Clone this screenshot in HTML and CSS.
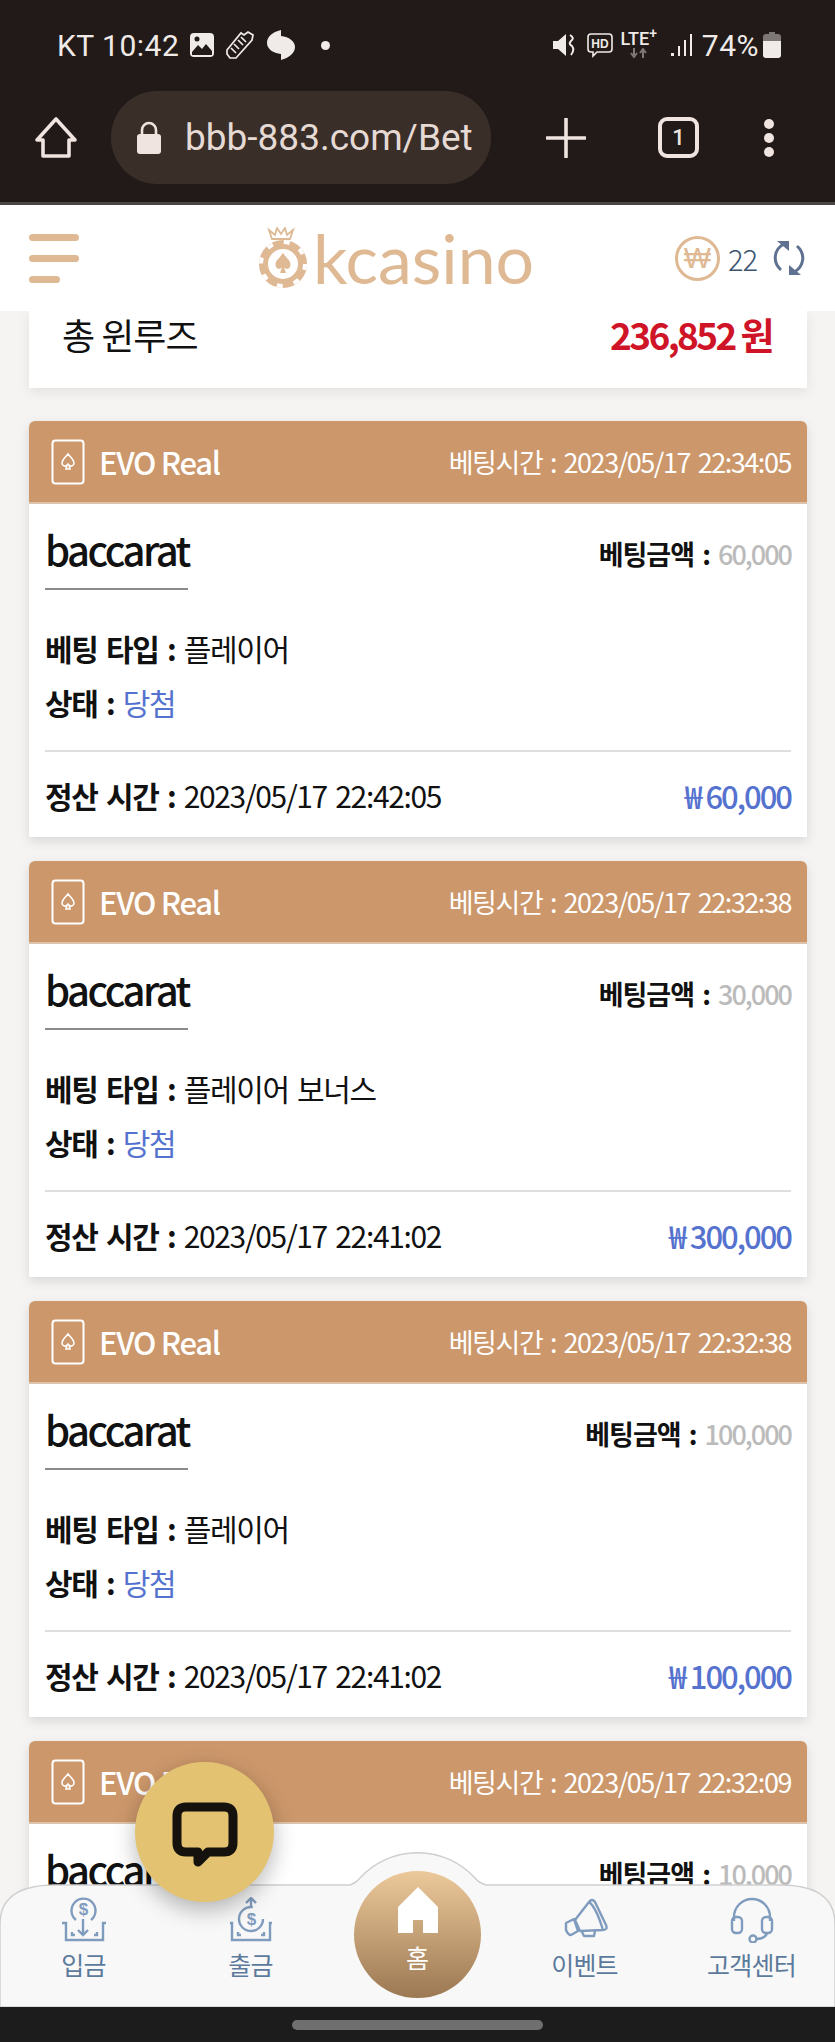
FILE: index.html
```html
<!DOCTYPE html>
<html>
<head>
  <title>kcasino</title>
  <link rel="stylesheet" href="styles.css">
</head>
<body>
  <div class="phoneTop">
    <div class="statusBar">
      <span class="statusText">KT 10:42</span>
      <svg class="statusIcon" width="26" height="26" viewBox="0 0 26 26">
        <rect x="1" y="1" width="24" height="24" rx="4" fill="#f0ebe8"/>
        <path d="M3 20 L9 13 L13 17 L17 12 L23 19 V23 H3 Z" fill="#211a18"/>
        <circle cx="8" cy="7" r="2.5" fill="#211a18"/>
      </svg>
      <svg class="statusIcon" width="30" height="30" viewBox="0 0 30 30">
        <path d="M2 20 L16 3 L19 5 L23 2 L28 5 L27 10 L11 28 L5 28 L2 24 Z M6 18 L11 23 M9 14 L14 19 M13 10 L18 15 M16 7 L21 12" fill="none" stroke="#f0ebe8" stroke-width="1.7"/>
      </svg>
      <svg class="statusIcon" width="32" height="30" viewBox="0 0 32 30">
        <path d="M16 0 C7 2 2 7 2 13 C2 19 8 23 16 24 Z M16 6 C24 7 30 11 30 17 C30 23 24 28 16 30 Z" fill="#f0ebe8"/>
      </svg>
      <span class="statusDot"></span>
      <span class="statusGap"></span>
      <svg class="statusIcon" width="24" height="26" viewBox="0 0 24 26">
        <path d="M1 9 H6 L14 2 V24 L6 17 H1 Z" fill="#f0ebe8"/>
        <path d="M18 3 Q23 6 19 9 Q16 12 20 14 Q23 18 19 23" fill="none" stroke="#f0ebe8" stroke-width="2"/>
      </svg>
      <svg class="statusIcon" width="28" height="26" viewBox="0 0 28 26">
        <path d="M5 2 H23 Q26 2 26 5 V17 Q26 20 23 20 H11 L7 24 V20 H5 Q2 20 2 17 V5 Q2 2 5 2 Z" fill="none" stroke="#f0ebe8" stroke-width="1.6"/>
        <text x="14" y="16" class="hdText">HD</text>
      </svg>
      <span class="lteBox">LTE<sup>+</sup><svg width="20" height="10" viewBox="0 0 20 10"><path d="M5 0 V8 M2 5 L5 9 L8 5 M14 10 V2 M11 5 L14 1 L17 5" fill="none" stroke="#7d7876" stroke-width="2"/></svg></span>
      <svg class="statusIcon" width="22" height="24" viewBox="0 0 22 24">
        <path d="M1 20 H4 V23 H1 Z M8 13 H10 V23 H8 Z M14 7 H16 V23 H14 Z M20 1 H22 V23 H20 Z" fill="#f0ebe8"/>
      </svg>
      <span class="statusText">74%</span>
      <svg class="statusIcon battery" width="18" height="26" viewBox="0 0 18 26">
        <path d="M6 0 H12 V2 H15 Q18 2 18 5 V9 H0 V5 Q0 2 3 2 H6 Z" fill="#7d7876"/>
        <path d="M0 9 H18 V23 Q18 26 15 26 H3 Q0 26 0 23 Z" fill="#f0ebe8"/>
      </svg>
    </div>
    <div class="urlBar">
      <svg width="44" height="44" viewBox="0 0 44 44">
        <path d="M22 3 L3 24 H9 V40 H35 V24 H41 Z" fill="none" stroke="#efe4df" stroke-width="3.6" stroke-linejoin="round"/>
      </svg>
      <div class="urlPill">
        <svg width="26" height="34" viewBox="0 0 26 34">
          <path d="M6 14 V9 A7 7 0 0 1 20 9 V14" fill="none" stroke="#efe4df" stroke-width="2.6"/>
          <rect x="1" y="13" width="24" height="20" rx="3" fill="#efe4df"/>
        </svg>
        <span class="urlText">bbb-883.com/Bet</span>
      </div>
      <svg class="plusIcon" width="40" height="40" viewBox="0 0 40 40">
        <path d="M20 1 V39 M1 20 H39" stroke="#efe4df" stroke-width="3.6" stroke-linecap="round"/>
      </svg>
      <span class="tabCount">1</span>
      <span class="moreDots"><i></i><i></i><i></i></span>
    </div>
  </div>

  <header class="siteHeader">
    <div class="menuBars"><i></i><i></i><i></i></div>
    <div class="logo">
      <svg width="52" height="62" viewBox="0 0 52 62">
        <path d="M15 12 L12 3 L18 8 L20 1 L24 7 L28 1 L30 8 L36 3 L33 12 Z" fill="none" stroke="#deb993" stroke-width="1.8"/>
        <circle cx="26" cy="37" r="19.5" fill="none" stroke="#deb993" stroke-width="9"/>
        <circle cx="26" cy="37" r="22" fill="none" stroke="#fff" stroke-width="4" stroke-dasharray="6 11.3"/>
        <path d="M26 26 C30 32 35 34 33 40 C31 43 28 42 27 40 L29 46 H23 L25 40 C24 42 21 43 19 40 C17 34 22 32 26 26 Z" fill="#deb993"/>
      </svg>
      <span class="logoText">kcasino</span>
    </div>
    <div class="balance">
      <span class="wonMark">₩</span>
      <span class="balanceNum">22</span>
      <svg width="36" height="36" viewBox="0 0 36 36">
        <path d="M13 4 C3 9 1 22 10 30" fill="none" stroke="#5f7190" stroke-width="3"/>
        <path d="M23 32 C33 27 35 14 26 6" fill="none" stroke="#5f7190" stroke-width="3"/>
        <path d="M6 1 H18 V11 Z M30 35 H18 V25 Z" fill="#5f7190"/>
      </svg>
    </div>
  </header>

  <main class="content">
    <section class="summary">
      <span class="summaryLabel">총 윈루즈</span>
      <span class="summaryValue">236,852 원</span>
    </section>

    <article class="betCard">
      <div class="cardHead">
        <svg class="cardIcon" width="34" height="46" viewBox="0 0 34 46">
          <rect x="1.5" y="1.5" width="31" height="43" rx="3" fill="none" stroke="#fff" stroke-width="2"/>
          <path d="M17 15 C20 19 23 20 23 24 C23 27 20 28 18 26 L19 30 H15 L16 26 C14 28 11 27 11 24 C11 20 14 19 17 15 Z" fill="none" stroke="#fff" stroke-width="1.6"/>
        </svg>
        <span class="gameName">EVO Real</span>
        <span class="betTime">베팅시간 : 2023/05/17 22:34:05</span>
      </div>
      <div class="cardBody">
        <div class="titleRow">
          <h2>baccarat</h2>
          <span class="betAmount"><b>베팅금액 :</b> <em>60,000</em></span>
        </div>
        <p class="infoRow"><b>베팅 타입 :</b> 플레이어</p>
        <p class="infoRow"><b>상태 :</b> <span class="win">당첨</span></p>
        <div class="cardFoot">
          <span><b>정산 시간 :</b> 2023/05/17 22:42:05</span>
          <span class="payout">₩ 60,000</span>
        </div>
      </div>
    </article>

    <article class="betCard">
      <div class="cardHead">
        <svg class="cardIcon" width="34" height="46" viewBox="0 0 34 46">
          <rect x="1.5" y="1.5" width="31" height="43" rx="3" fill="none" stroke="#fff" stroke-width="2"/>
          <path d="M17 15 C20 19 23 20 23 24 C23 27 20 28 18 26 L19 30 H15 L16 26 C14 28 11 27 11 24 C11 20 14 19 17 15 Z" fill="none" stroke="#fff" stroke-width="1.6"/>
        </svg>
        <span class="gameName">EVO Real</span>
        <span class="betTime">베팅시간 : 2023/05/17 22:32:38</span>
      </div>
      <div class="cardBody">
        <div class="titleRow">
          <h2>baccarat</h2>
          <span class="betAmount"><b>베팅금액 :</b> <em>30,000</em></span>
        </div>
        <p class="infoRow"><b>베팅 타입 :</b> 플레이어 보너스</p>
        <p class="infoRow"><b>상태 :</b> <span class="win">당첨</span></p>
        <div class="cardFoot">
          <span><b>정산 시간 :</b> 2023/05/17 22:41:02</span>
          <span class="payout">₩ 300,000</span>
        </div>
      </div>
    </article>

    <article class="betCard">
      <div class="cardHead">
        <svg class="cardIcon" width="34" height="46" viewBox="0 0 34 46">
          <rect x="1.5" y="1.5" width="31" height="43" rx="3" fill="none" stroke="#fff" stroke-width="2"/>
          <path d="M17 15 C20 19 23 20 23 24 C23 27 20 28 18 26 L19 30 H15 L16 26 C14 28 11 27 11 24 C11 20 14 19 17 15 Z" fill="none" stroke="#fff" stroke-width="1.6"/>
        </svg>
        <span class="gameName">EVO Real</span>
        <span class="betTime">베팅시간 : 2023/05/17 22:32:38</span>
      </div>
      <div class="cardBody">
        <div class="titleRow">
          <h2>baccarat</h2>
          <span class="betAmount"><b>베팅금액 :</b> <em>100,000</em></span>
        </div>
        <p class="infoRow"><b>베팅 타입 :</b> 플레이어</p>
        <p class="infoRow"><b>상태 :</b> <span class="win">당첨</span></p>
        <div class="cardFoot">
          <span><b>정산 시간 :</b> 2023/05/17 22:41:02</span>
          <span class="payout">₩ 100,000</span>
        </div>
      </div>
    </article>

    <article class="betCard">
      <div class="cardHead">
        <svg class="cardIcon" width="34" height="46" viewBox="0 0 34 46">
          <rect x="1.5" y="1.5" width="31" height="43" rx="3" fill="none" stroke="#fff" stroke-width="2"/>
          <path d="M17 15 C20 19 23 20 23 24 C23 27 20 28 18 26 L19 30 H15 L16 26 C14 28 11 27 11 24 C11 20 14 19 17 15 Z" fill="none" stroke="#fff" stroke-width="1.6"/>
        </svg>
        <span class="gameName">EVO Real</span>
        <span class="betTime">베팅시간 : 2023/05/17 22:32:09</span>
      </div>
      <div class="cardBody">
        <div class="titleRow">
          <h2>baccarat</h2>
          <span class="betAmount"><b>베팅금액 :</b> <em>10,000</em></span>
        </div>
      </div>
    </article>
  </main>

  <button class="chatButton">
    <svg width="66" height="68" viewBox="0 0 66 68">
      <path d="M14 5 H52 Q61 5 61 14 V41 Q61 50 52 50 H36 L26 60 V50 H14 Q5 50 5 41 V14 Q5 5 14 5 Z" fill="none" stroke="#15120e" stroke-width="9" stroke-linejoin="round"/>
    </svg>
  </button>

  <nav class="bottomNav">
    <svg class="navShape" width="835" height="155" viewBox="0 0 835 155">
      <path d="M0 72 Q0 33 55 33 H350 Q356 31 360 26 A78 78 0 0 1 475 26 Q479 31 486 33 H780 Q835 33 835 72 V155 H0 Z" fill="#f8f8f8" stroke="#cfcfcf" stroke-width="1.5"/>
    </svg>
    <a class="navItem">
      <svg width="48" height="46" viewBox="0 0 48 46">
        <path d="M16 23 A12 12 0 1 1 31 23" fill="none" stroke="#7f9bbd" stroke-width="2.4"/>
        <text x="23" y="18" class="navDollar">$</text>
        <path d="M23 22 V38 M18 33 L23 38 L28 33" fill="none" stroke="#7f9bbd" stroke-width="2.4"/>
        <path d="M2 26 H6 V43 H43 V26 H46 M12 35 V38 H15 M37 35 V38 H34" fill="none" stroke="#7f9bbd" stroke-width="2.4"/>
      </svg>
      <span>입금</span>
    </a>
    <a class="navItem">
      <svg width="44" height="46" viewBox="0 0 44 46">
        <path d="M22 1 V10 M17 6 L22 1 L27 6" fill="none" stroke="#7f9bbd" stroke-width="2.4"/>
        <circle cx="22" cy="22" r="12" fill="none" stroke="#7f9bbd" stroke-width="2.4" stroke-dasharray="58 18"/>
        <text x="22" y="28" class="navDollar">$</text>
        <path d="M1 26 H3 V43 H41 V26 H43 M9 35 V38 H12 M35 35 V38 H32" fill="none" stroke="#7f9bbd" stroke-width="2.4"/>
      </svg>
      <span>출금</span>
    </a>
    <a class="navHome">
      <svg width="42" height="46" viewBox="0 0 42 46">
        <path d="M21 0 L41 20 V46 H26 V33 H16 V46 H1 V20 Z" fill="#fff"/>
      </svg>
      <span>홈</span>
    </a>
    <a class="navItem">
      <svg width="46" height="46" viewBox="0 0 46 46">
        <path d="M13 23 L27 5 Q30 1 33 5 L44 28 Q46 33 41 33 L18 34 Z M27 5 Q34 10 41 33" fill="none" stroke="#7f9bbd" stroke-width="2.4" stroke-linejoin="round"/>
        <path d="M4 26 L12 22 L16 34 L9 38 Q6 38 4 33 Z M20 35 L22 39 H32 L33 34" fill="none" stroke="#7f9bbd" stroke-width="2.4" stroke-linejoin="round"/>
      </svg>
      <span>이벤트</span>
    </a>
    <a class="navItem">
      <svg width="44" height="46" viewBox="0 0 44 46">
        <path d="M4 24 V20 A18 18 0 0 1 40 20 V24" fill="none" stroke="#7f9bbd" stroke-width="2.4"/>
        <rect x="2" y="20" width="10" height="16" rx="4" fill="none" stroke="#7f9bbd" stroke-width="2.4"/>
        <rect x="32" y="20" width="10" height="16" rx="4" fill="none" stroke="#7f9bbd" stroke-width="2.4"/>
        <path d="M37 36 Q36 41 27 42" fill="none" stroke="#7f9bbd" stroke-width="2.4"/>
        <circle cx="23" cy="42" r="3.5" fill="none" stroke="#7f9bbd" stroke-width="2.4"/>
      </svg>
      <span>고객센터</span>
    </a>
  </nav>

  <div class="gestureBar"><i></i></div>
</body>
</html>
```

FILE: styles.css
```css
* {
  box-sizing: border-box;
}
body {
  position: relative;
  display: flex;
  flex-direction: column;
  width: 835px;
  height: 2042px;
  margin: 0;
  overflow: hidden;
  font-family: "Noto Sans CJK KR", "Noto Sans", sans-serif;
  background-color: #f5f4f3;
  color: #111;
}

/* phone status bar and browser bar */
.phoneTop {
  flex: none;
  height: 205px;
  background-color: #211a18;
  border-bottom: 3px solid #4a4542;
}
.statusBar {
  display: flex;
  align-items: center;
  gap: 10px;
  height: 30px;
  margin-top: 30px;
  padding: 0 54px 0 57px;
  color: #f0ebe8;
}
.statusText {
  font-family: Roboto, sans-serif;
  font-size: 30px;
  letter-spacing: 0.5px;
}
.statusDot {
  width: 9px;
  height: 9px;
  margin-left: 14px;
  border-radius: 50%;
  background-color: #f0ebe8;
}
.statusGap {
  flex-grow: 1;
}
.battery {
  margin-left: -6px;
}
.hdText {
  font-family: "Liberation Sans", sans-serif;
  font-size: 12px;
  font-weight: bold;
  text-anchor: middle;
  fill: #f0ebe8;
}
.lteBox {
  position: relative;
  width: 42px;
  height: 30px;
  margin-left: -6px;
  font-family: Roboto, sans-serif;
  font-size: 18px;
  font-weight: 500;
  line-height: 18px;
  text-align: center;
}
.lteBox sup {
  font-size: 14px;
  line-height: 0;
}
.lteBox svg {
  display: block;
  margin: 0 auto;
}
.urlBar {
  display: flex;
  align-items: center;
  height: 93px;
  margin-top: 31px;
  padding-left: 34px;
}
.urlPill {
  display: flex;
  align-items: center;
  gap: 23px;
  width: 380px;
  height: 93px;
  margin-left: 33px;
  padding-left: 25px;
  border-radius: 46px;
  background-color: #3a2e29;
}
.urlText {
  font-family: Roboto, sans-serif;
  font-size: 37px;
  color: #e6dad5;
}
.plusIcon {
  margin-left: 55px;
}
.tabCount {
  width: 41px;
  height: 41px;
  margin-left: 72px;
  border: 4px solid #efe4df;
  border-radius: 9px;
  font-family: Roboto, sans-serif;
  font-size: 22px;
  font-weight: 500;
  line-height: 33px;
  text-align: center;
  color: #efe4df;
}
.moreDots {
  display: flex;
  flex-direction: column;
  gap: 4px;
  margin-left: 65px;
}
.moreDots i {
  width: 10px;
  height: 10px;
  border-radius: 50%;
  background-color: #efe4df;
}

/* site header */
.siteHeader {
  flex: none;
  display: flex;
  align-items: center;
  height: 106px;
  padding: 0 28px 0 29px;
  background-color: #fff;
}
.menuBars {
  display: flex;
  flex-direction: column;
  gap: 14px;
  width: 50px;
}
.menuBars i {
  height: 7px;
  border-radius: 4px;
  background-color: #deb993;
}
.menuBars i:last-child {
  width: 31px;
}
.logo {
  display: flex;
  align-items: center;
  gap: 4px;
  margin-left: 178px;
}
.logoText {
  padding-right: 2px;
  font-family: Lato, sans-serif;
  font-size: 68px;
  line-height: 82px;
  color: #deb993;
}
.balance {
  display: flex;
  align-items: center;
  margin-left: auto;
}
.wonMark {
  width: 45px;
  height: 45px;
  border: 3px solid #deb993;
  border-radius: 50%;
  font-family: "Liberation Sans", sans-serif;
  font-size: 29px;
  line-height: 39px;
  text-align: center;
  color: #deb993;
}
.balanceNum {
  margin: 0 14px 0 8px;
  font-size: 29px;
  font-weight: 300;
  letter-spacing: -1px;
  color: #3a5470;
}

/* page content */
.content {
  flex: 1;
  min-height: 0;
  overflow: hidden;
  padding: 0 28px 0 29px;
}
.summary {
  display: flex;
  justify-content: space-between;
  height: 77px;
  margin-bottom: 33px;
  padding: 0 35px 0 33px;
  background-color: #fff;
  box-shadow: 0 4px 12px rgba(0, 0, 0, 0.08);
}
.summaryLabel {
  font-size: 36px;
  line-height: 47px;
  letter-spacing: -1px;
}
.summaryValue {
  font-size: 37px;
  font-weight: bold;
  line-height: 47px;
  letter-spacing: -2.6px;
  color: #d01427;
}
.betCard {
  height: 416px;
  margin-bottom: 24px;
  border-radius: 6px 6px 0 0;
  background-color: #fff;
  box-shadow: 0 4px 12px rgba(0, 0, 0, 0.12);
}
.cardHead {
  display: flex;
  align-items: center;
  height: 83px;
  padding: 0 16px 0 22px;
  border-radius: 6px 6px 0 0;
  border-bottom: 2px solid #ddc3ab;
  background-color: #cc976b;
  color: #fff;
}
.gameName {
  margin-left: 14px;
  font-size: 31px;
  font-weight: 500;
  letter-spacing: -1.3px;
}
.betTime {
  margin-left: auto;
  font-size: 27px;
  letter-spacing: -1.45px;
  word-spacing: 3px;
}
.cardBody {
  padding: 0 16px;
}
.titleRow {
  display: flex;
  justify-content: space-between;
  height: 86px;
  margin-bottom: 32px;
}
.titleRow h2 {
  width: 143px;
  height: 86px;
  margin: 0;
  border-bottom: 2px solid #8a8a8a;
  font-size: 40px;
  font-weight: 500;
  line-height: 90px;
  letter-spacing: -2.5px;
}
.betAmount {
  padding-top: 31px;
  font-size: 27px;
  line-height: 38px;
  letter-spacing: -1px;
  word-spacing: 3px;
}
.betAmount em {
  font-style: normal;
  font-weight: 500;
  letter-spacing: -2px;
  color: #bbb;
}
.infoRow {
  height: 54px;
  margin: 0;
  font-size: 30px;
  line-height: 52px;
  letter-spacing: -1.35px;
  word-spacing: 3px;
}
.infoRow .win {
  color: #5672cf;
}
.cardFoot {
  display: flex;
  justify-content: space-between;
  align-items: center;
  height: 88px;
  margin-top: 20px;
  border-top: 2px solid #dedede;
  font-size: 30px;
  letter-spacing: -1.35px;
  word-spacing: 3px;
}
.payout {
  font-size: 31px;
  font-weight: 500;
  letter-spacing: -2px;
  word-spacing: 0;
  color: #5672cf;
}

/* floating chat button */
.chatButton {
  position: absolute;
  left: 135px;
  top: 1762px;
  display: flex;
  align-items: center;
  justify-content: center;
  width: 139px;
  height: 140px;
  padding: 8px 0 0;
  border: none;
  border-radius: 50%;
  background-color: #e3c372;
  box-shadow: 0 8px 22px rgba(0, 0, 0, 0.28);
  z-index: 3;
}

/* bottom navigation */
.bottomNav {
  position: absolute;
  left: 0;
  bottom: 35px;
  display: grid;
  grid-template-columns: repeat(5, 167px);
  width: 835px;
  height: 122px;
  z-index: 2;
}
.navShape {
  position: absolute;
  left: 0;
  bottom: 0;
}
.navItem {
  position: relative;
  display: flex;
  flex-direction: column;
  align-items: center;
  padding-top: 12px;
  font-size: 25px;
  letter-spacing: -0.8px;
  color: #5c7a9b;
}
.navItem span {
  margin-top: 3px;
}
.navDollar {
  font-family: "Liberation Sans", sans-serif;
  font-size: 17px;
  font-weight: bold;
  text-anchor: middle;
  fill: #7f9bbd;
}
.navHome {
  position: relative;
  display: flex;
  flex-direction: column;
  align-items: center;
  width: 127px;
  height: 127px;
  margin: -14px 0 0 20px;
  padding-top: 16px;
  border-radius: 50%;
  background: linear-gradient(#ecc99a, #9c7853);
  font-size: 25px;
  line-height: 32px;
  color: #fff;
}
.navHome span {
  margin-top: 8px;
}
.gestureBar {
  flex: none;
  display: flex;
  justify-content: center;
  align-items: center;
  height: 35px;
  background-color: #1c1c1c;
}
.gestureBar i {
  width: 251px;
  height: 10px;
  border-radius: 5px;
  background-color: #6f6f6f;
}
```
